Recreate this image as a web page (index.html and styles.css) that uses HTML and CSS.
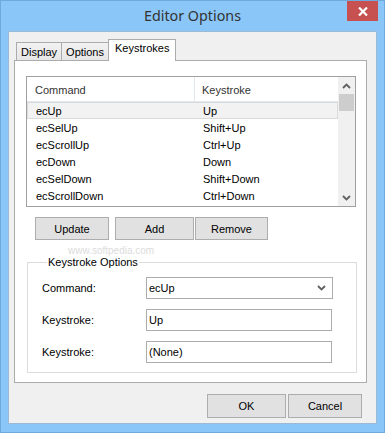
FILE: index.html
```html
<!DOCTYPE html>
<html lang="en">
<head>
  <meta charset="UTF-8">
  <title>Editor Options</title>
  <link rel="stylesheet" href="styles.css">
</head>
<body>
  <div class="window">
    <div class="titlebar">
      <span></span>
      <span class="title">Editor Options</span>
      <span class="close">
        <svg width="10" height="9" viewBox="0 0 10 9"><path d="M1 0.5 L9 8.5 M9 0.5 L1 8.5" stroke="#fff" stroke-width="2.2" fill="none"/></svg>
      </span>
    </div>
    <div class="client">
      <div class="tabs">
        <div class="tab">Display</div>
        <div class="tab">Options</div>
        <div class="tab active">Keystrokes</div>
      </div>
      <div class="panel">
        <div class="listview">
          <div class="list-body">
            <div class="list-head">
              <div class="col col-cmd">Command</div>
              <div class="col col-key">Keystroke</div>
            </div>
            <div class="row selected"><div class="col col-cmd">ecUp</div><div class="col col-key">Up</div></div>
            <div class="row"><div class="col col-cmd">ecSelUp</div><div class="col col-key">Shift+Up</div></div>
            <div class="row"><div class="col col-cmd">ecScrollUp</div><div class="col col-key">Ctrl+Up</div></div>
            <div class="row"><div class="col col-cmd">ecDown</div><div class="col col-key">Down</div></div>
            <div class="row"><div class="col col-cmd">ecSelDown</div><div class="col col-key">Shift+Down</div></div>
            <div class="row"><div class="col col-cmd">ecScrollDown</div><div class="col col-key">Ctrl+Down</div></div>
          </div>
          <div class="scrollbar">
            <div class="arrow">
              <svg width="9" height="6" viewBox="0 0 9 6"><path d="M1 5 L4.5 1.5 L8 5" stroke="#606060" stroke-width="1.8" fill="none"/></svg>
            </div>
            <div class="thumb"></div>
            <div class="track"></div>
            <div class="arrow">
              <svg width="9" height="6" viewBox="0 0 9 6"><path d="M1 1 L4.5 4.5 L8 1" stroke="#606060" stroke-width="1.8" fill="none"/></svg>
            </div>
          </div>
        </div>

        <div class="list-buttons">
          <button class="btn btn-update">Update</button>
          <button class="btn btn-add">Add</button>
          <button class="btn btn-remove">Remove</button>
          <span class="watermark">www.softpedia.com</span>
        </div>

        <fieldset class="group">
          <legend>Keystroke Options</legend>
          <div class="field">
            <label>Command:</label>
            <div class="combo">
              <span>ecUp</span>
              <svg width="9" height="6" viewBox="0 0 9 6"><path d="M1 1 L4.5 4.5 L8 1" stroke="#606060" stroke-width="1.8" fill="none"/></svg>
            </div>
          </div>
          <div class="field">
            <label>Keystroke:</label>
            <div class="input">Up</div>
          </div>
          <div class="field">
            <label>Keystroke:</label>
            <div class="input">(None)</div>
          </div>
        </fieldset>
      </div>

      <div class="dialog-buttons">
        <button class="btn btn-ok">OK</button>
        <button class="btn btn-cancel">Cancel</button>
      </div>
    </div>
  </div>
</body>
</html>
```

FILE: styles.css
```css
* { margin: 0; padding: 0; box-sizing: border-box; }
body {
  font-family: 'Liberation Sans', Arial, sans-serif;
  font-size: 11px;
  color: #000;
  background: #8ac6f7;
}
.window {
  width: 385px;
  height: 433px;
  background: #8ac6f7;
  border: 1px solid #6fa9de;
  display: flex;
  flex-direction: column;
}
.titlebar {
  height: 30px;
  display: grid;
  grid-template-columns: 1fr auto 1fr;
  align-items: start;
}
.title {
  font-family: 'Noto Sans', 'Open Sans', sans-serif;
  font-size: 14.3px;
  color: #333;
  line-height: 30px;
}
.close {
  justify-self: end;
  width: 31px;
  height: 20px;
  margin-right: 6px;
  background: #c75050;
  display: flex;
  align-items: center;
  justify-content: center;
}
.client {
  margin: 0 7px 8px 7px;
  flex: 1;
  background: #f0f0f0;
  border: 1px solid #9cbad6;
  padding: 7px 9px 0 5px;
  display: flex;
  flex-direction: column;
}
.tabs {
  display: flex;
  align-items: flex-end;
  height: 21px;
  padding-left: 2px;
}
.tab {
  height: 18px;
  padding: 1px 4px 0;
  line-height: 17px;
  border: 1px solid #acacac;
  border-bottom: none;
  background: linear-gradient(#f2f2f2, #e6e6e6);
  margin-left: -1px;
}
.tab:first-child { margin-left: 0; }
.tab.active {
  height: 22px;
  margin-bottom: -1px;
  padding: 0 6px;
  line-height: 17px;
  background: #fff;
  z-index: 1;
}
.panel {
  height: 323px;
  background: #fff;
  border: 1px solid #acacac;
  padding: 15px 0 0 11px;
}
.listview {
  width: 330px;
  height: 131px;
  border: 1px solid #a0a0a0;
  display: flex;
}
.list-body { flex: 1; }
.list-head {
  display: flex;
  height: 25px;
  border-bottom: 1px solid #e2e8ef;
  color: #333;
  align-items: center;
}
.list-head .col-cmd { border-right: 1px solid #e2e8ef; height: 100%; display: flex; align-items: center; padding-top: 1px; }
.list-head .col-key { padding-top: 1px; }
.col-cmd { width: 168px; padding-left: 8px; }
.col-key { padding-left: 7px; }
.row {
  display: flex;
  height: 17px;
  border: 1px solid transparent;
}
.row .col { line-height: 15px; padding-top: 1px; }
.row.selected {
  background: #f2f2f2;
  border-color: #dadada;
}
.scrollbar {
  width: 17px;
  background: #f0f0f0;
  display: flex;
  flex-direction: column;
}
.arrow {
  height: 17px;
  display: flex;
  align-items: center;
  justify-content: center;
}
.thumb {
  height: 17px;
  margin: 0 1px;
  background: #cdcdcd;
}
.track { flex: 1; }
.list-buttons {
  position: relative;
  display: flex;
  margin: 10px 0 0 9px;
  height: 23px;
}
.btn {
  font-family: 'Liberation Sans', Arial, sans-serif;
  font-size: 11px;
  color: #000;
  height: 23px;
  background: #e1e1e1;
  border: 1px solid #adadad;
}
.btn-update { width: 74px; }
.btn-add { width: 79px; margin-left: 6px; }
.btn-remove { width: 73px; margin-left: 1px; }
.watermark {
  position: absolute;
  left: 33px;
  top: 28px;
  font-size: 10px;
  line-height: 11px;
  color: #dcdcdc;
}
.group {
  width: 330px;
  margin: 16px 0 0 1px;
  border: 1px solid #dcdcdc;
  padding: 9px 23px 9px 14px;
  display: flex;
  flex-direction: column;
  gap: 10px;
}
.group legend {
  margin-left: 5px;
  padding: 0 1px;
  font-size: 11px;
}
.field {
  display: flex;
  align-items: center;
}
.field label {
  width: 104px;
  font-size: 11px;
}
.combo, .input {
  height: 22px;
  border: 1px solid #acacac;
  background: #fff;
  padding-left: 2px;
  display: flex;
  align-items: center;
  font-size: 11px;
}
.combo {
  width: 187px;
  justify-content: space-between;
  padding-right: 6px;
}
.input { width: 186px; }
.dialog-buttons {
  display: flex;
  justify-content: flex-end;
  gap: 2px;
  margin-top: 11px;
  padding-right: 5px;
}
.btn-ok { width: 79px; height: 24px; }
.btn-cancel { width: 74px; height: 24px; }
```
